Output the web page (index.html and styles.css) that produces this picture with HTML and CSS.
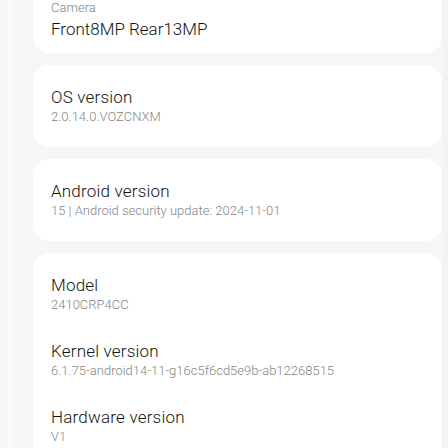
FILE: index.html
```html
<!DOCTYPE html>
<html lang="en">
<head>
<meta charset="utf-8">
<title>About phone</title>
<link rel="stylesheet" href="styles.css">
</head>
<body>
<div class="frame">
  <div class="edge-left"><div class="edge-line"></div></div>
  <main class="list">
    <section class="card card-cut">
      <div class="item item-rev">
        <div class="label">Camera</div>
        <div class="value">Front8MP Rear13MP</div>
      </div>
    </section>
    <section class="card">
      <div class="item">
        <div class="title">OS version</div>
        <div class="sub">2.0.14.0.VOZCNXM</div>
      </div>
    </section>
    <section class="card">
      <div class="item">
        <div class="title">Android version</div>
        <div class="sub">15 | Android security update: 2024-11-01</div>
      </div>
    </section>
    <section class="card card-open">
      <div class="item">
        <div class="title">Model</div>
        <div class="sub">2410CRP4CC</div>
      </div>
      <div class="item">
        <div class="title">Kernel version</div>
        <div class="sub">6.1.75-android14-11-g16c5f6cd5e9b-ab12268515</div>
      </div>
      <div class="item">
        <div class="title">Hardware version</div>
        <div class="sub">V1</div>
      </div>
    </section>
  </main>
  <div class="edge-right"></div>
</div>
</body>
</html>
```

FILE: styles.css
```css
* { box-sizing: border-box; }
html, body {
  margin: 0;
  padding: 0;
  height: 100%;
  overflow: hidden;
  background: #f6f6f6;
  font-family: Roboto, "Noto Sans", "Liberation Sans", sans-serif;
  font-weight: 300;
}
.frame {
  display: flex;
  height: 448px;
}
.edge-left {
  width: 33px;
  flex: none;
  display: flex;
  padding-left: 8px;
}
.edge-line {
  width: 4px;
  background: #fbfbfb;
}
.edge-right {
  width: 6px;
  flex: none;
  background: #f3f3f3;
}
.list {
  flex: 1;
  display: flex;
  flex-direction: column;
  gap: 12px;
}
.card {
  background: #ffffff;
  border-radius: 16px;
  padding: 8px 0;
}
.card-cut {
  border-radius: 0 0 16px 16px;
  padding: 0;
}
.card-open {
  border-radius: 16px 16px 0 0;
  flex: 1;
}
.item {
  padding: 13px 18px;
  height: 66px;
}
.item-rev {
  padding: 0 18px 13px;
  height: auto;
}
.title, .value {
  font-size: 17px;
  line-height: 22px;
  color: #141414;
  letter-spacing: 0.2px;
}
.value {
  letter-spacing: 0;
}
.sub, .label {
  font-size: 13px;
  line-height: 18px;
  color: #858585;
}
.label {
  line-height: 16px;
  margin-bottom: 2px;
}
```
